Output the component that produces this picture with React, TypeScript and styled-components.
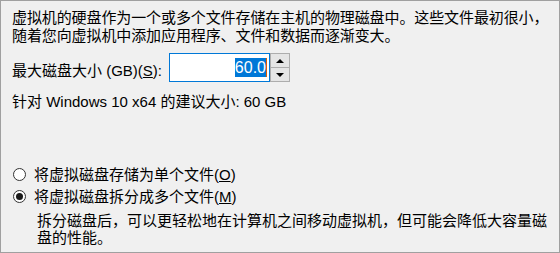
import React from 'react';
import styled, {createGlobalStyle} from 'styled-components';

const GlobalStyle = createGlobalStyle`
    html, body {
        margin: 0;
        padding: 0;
        background: #f0f0f0;
    }
    body {
        font-family: "Liberation Sans", "Noto Sans CJK SC", sans-serif;
        font-size: 15px;
        color: #000;
    }
`;

const Panel = styled.div`
    box-sizing: border-box;
    width: 560px;
    height: 253px;
    border: 1px solid #a0a0a0;
    background: #f0f0f0;
    padding: 8px 0 0 11px;
    display: flex;
    flex-direction: column;
    overflow: hidden;
`;

const Intro = styled.p`
    margin: 0;
    line-height: 17.5px;
    white-space: nowrap;
    letter-spacing: -0.1px;
`;

const SizeRow = styled.div`
    display: flex;
    align-items: center;
    margin-top: 9px;
`;

const Label = styled.span`
    width: 157px;
    white-space: nowrap;
    padding-top: 4px;
`;

const SpinBox = styled.div`
    display: flex;
`;

const Field = styled.div`
    box-sizing: border-box;
    width: 101px;
    height: 29px;
    border: 1px solid #0078d7;
    background: #fff;
    display: flex;
    align-items: center;
    justify-content: flex-end;
    padding-right: 2px;
    font-size: 16px;
`;

const Selected = styled.span`
    background: #0078d7;
    color: #fff;
    line-height: 18px;
    padding-top: 1px;
`;

const Caret = styled.span`
    width: 1px;
    height: 19px;
    background: #e05a00;
`;

const Arrows = styled.div`
    display: flex;
    flex-direction: column;
    width: 20px;
    height: 29px;
`;

const ArrowButton = styled.div`
    box-sizing: border-box;
    flex: 1;
    background: #e5e5e5;
    border: 1px solid #adadad;
    display: flex;
    align-items: center;
    justify-content: center;
    & + & {
        border-top: none;
    }
`;

const Triangle = styled.span<{ $up?: boolean }>`
    width: 0;
    height: 0;
    border-left: 4px solid transparent;
    border-right: 4px solid transparent;
    ${p => p.$up ? 'border-bottom: 4px solid #000;' : 'border-top: 4px solid #000;'}
`;

const Recommend = styled.p`
    margin: 10px 0 0 0;
    line-height: 19px;
    white-space: nowrap;
`;

const Options = styled.div`
    display: flex;
    flex-direction: column;
    margin-top: 54px;
    gap: 3px;
`;

const Option = styled.label`
    display: flex;
    align-items: center;
    gap: 8px;
    line-height: 19px;
    white-space: nowrap;
`;

const RadioDot = styled.span<{ $checked?: boolean }>`
    box-sizing: border-box;
    width: 13px;
    height: 13px;
    border-radius: 50%;
    border: 1px solid #333;
    background: #fff;
    display: flex;
    align-items: center;
    justify-content: center;
    margin-left: 1px;
    &::after {
        content: "";
        width: 7px;
        height: 7px;
        border-radius: 50%;
        background: ${p => p.$checked ? '#1a1a1a' : 'transparent'};
    }
`;

const Note = styled.p`
    margin: 6px 0 0 25px;
    line-height: 17px;
    white-space: nowrap;
`;

const Key = styled.u`
    text-decoration: underline;
`;

export default function App() {
    return (
        <>
            <GlobalStyle />
            <Panel>
                <Intro>
                    虚拟机的硬盘作为一个或多个文件存储在主机的物理磁盘中。这些文件最初很小，<br />
                    随着您向虚拟机中添加应用程序、文件和数据而逐渐变大。
                </Intro>
                <SizeRow>
                    <Label>最大磁盘大小 (GB)(<Key>S</Key>):</Label>
                    <SpinBox>
                        <Field>
                            <Selected>60.0</Selected>
                            <Caret />
                        </Field>
                        <Arrows>
                            <ArrowButton><Triangle $up /></ArrowButton>
                            <ArrowButton><Triangle /></ArrowButton>
                        </Arrows>
                    </SpinBox>
                </SizeRow>
                <Recommend>针对 Windows 10 x64 的建议大小: 60 GB</Recommend>
                <Options>
                    <Option>
                        <RadioDot />
                        <span>将虚拟磁盘存储为单个文件(<Key>O</Key>)</span>
                    </Option>
                    <Option>
                        <RadioDot $checked />
                        <span>将虚拟磁盘拆分成多个文件(<Key>M</Key>)</span>
                    </Option>
                </Options>
                <Note>
                    拆分磁盘后，可以更轻松地在计算机之间移动虚拟机，但可能会降低大容量磁<br />
                    盘的性能。
                </Note>
            </Panel>
        </>
    );
}
